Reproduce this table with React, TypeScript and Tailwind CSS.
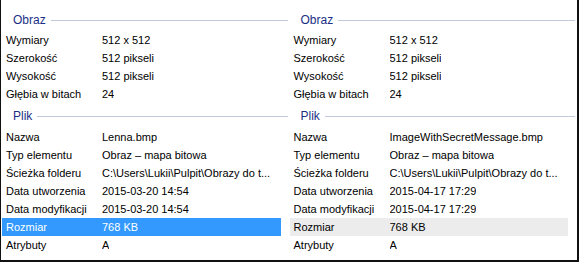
type Row = { label: string; value: string; hl?: 'blue' | 'gray' }

type Panel = {
  image: Row[]
  file: Row[]
}

const panels: Panel[] = [
  {
    image: [
      { label: 'Wymiary', value: '512 x 512' },
      { label: 'Szerokość', value: '512 pikseli' },
      { label: 'Wysokość', value: '512 pikseli' },
      { label: 'Głębia w bitach', value: '24' },
    ],
    file: [
      { label: 'Nazwa', value: 'Lenna.bmp' },
      { label: 'Typ elementu', value: 'Obraz – mapa bitowa' },
      { label: 'Ścieżka folderu', value: 'C:\\Users\\Lukii\\Pulpit\\Obrazy do t...' },
      { label: 'Data utworzenia', value: '2015-03-20 14:54' },
      { label: 'Data modyfikacji', value: '2015-03-20 14:54' },
      { label: 'Rozmiar', value: '768 KB', hl: 'blue' },
      { label: 'Atrybuty', value: 'A' },
    ],
  },
  {
    image: [
      { label: 'Wymiary', value: '512 x 512' },
      { label: 'Szerokość', value: '512 pikseli' },
      { label: 'Wysokość', value: '512 pikseli' },
      { label: 'Głębia w bitach', value: '24' },
    ],
    file: [
      { label: 'Nazwa', value: 'ImageWithSecretMessage.bmp' },
      { label: 'Typ elementu', value: 'Obraz – mapa bitowa' },
      { label: 'Ścieżka folderu', value: 'C:\\Users\\Lukii\\Pulpit\\Obrazy do t...' },
      { label: 'Data utworzenia', value: '2015-04-17 17:29' },
      { label: 'Data modyfikacji', value: '2015-04-17 17:29' },
      { label: 'Rozmiar', value: '768 KB', hl: 'gray' },
      { label: 'Atrybuty', value: 'A' },
    ],
  },
]

function GroupHeader({ title }: { title: string }) {
  return (
    <div className="flex h-[20px] items-center pl-[11px] pr-[2px]">
      <span className="text-[12px] text-[#1a2f85]">{title}</span>
      <div className="ml-[5px] h-px flex-1 bg-[#c3c9dc]" />
    </div>
  )
}

function PropRow({ row }: { row: Row }) {
  const bg =
    row.hl === 'blue'
      ? 'bg-[#3399ff] text-white'
      : row.hl === 'gray'
        ? 'bg-[#ececec] text-black'
        : 'text-black'
  return (
    <div className={`flex h-[18px] items-center mr-[9px] ${bg}`}>
      <span className="w-[100px] shrink-0 pl-[4px]">{row.label}</span>
      <span className="truncate">{row.value}</span>
    </div>
  )
}

function PropPanel({ panel }: { panel: Panel }) {
  return (
    <div className="flex w-[288px] flex-col pt-[10px]">
      <GroupHeader title="Obraz" />
      <div className="mt-[1px]">
        {panel.image.map((r) => (
          <PropRow key={r.label} row={r} />
        ))}
      </div>
      <div className="mt-[3px]">
        <GroupHeader title="Plik" />
      </div>
      <div className="mt-[2px]">
        {panel.file.map((r) => (
          <PropRow key={r.label} row={r} />
        ))}
      </div>
    </div>
  )
}

export default function App() {
  return (
    <div
      className="flex h-[262px] w-[579px] border-b-2 border-l border-r-2 border-[#111] bg-white pl-px text-[11px] leading-none"
      style={{ fontFamily: '"Liberation Sans", Arial, sans-serif' }}
    >
      {panels.map((p, i) => (
        <PropPanel key={i} panel={p} />
      ))}
    </div>
  )
}
